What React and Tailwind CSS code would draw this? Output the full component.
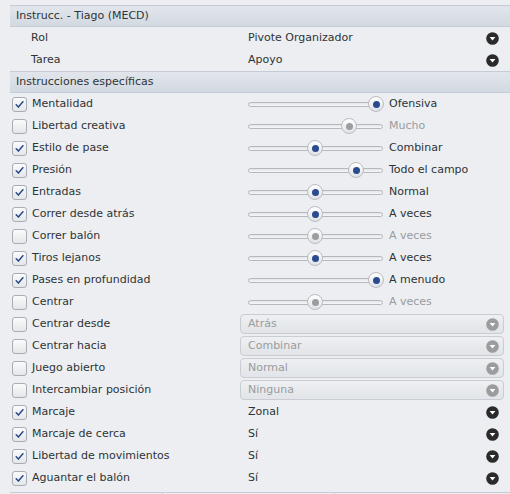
import React from 'react';

const font = { fontFamily: '"DejaVu Sans", "Liberation Sans", sans-serif' };

const Arrow = ({ disabled }) => (
  <svg width="13" height="13" viewBox="0 0 13 13" className="shrink-0">
    <circle cx="6.5" cy="6.5" r="6.3" fill={disabled ? '#9a9c9e' : '#2b2b2b'} />
    <path d="M3.6 5h5.8L6.5 8.4z" fill="#ffffff" />
  </svg>
);

const Check = ({ on }) => (
  <div className="w-[15px] h-[15px] rounded-[3px] border border-[#a9adb3] bg-gradient-to-b from-[#fbfbfc] to-[#e4e6e9] flex items-center justify-center shrink-0">
    {on && (
      <svg width="11" height="11" viewBox="0 0 11 11">
        <path d="M2.2 5.8l2.2 2.3L8.9 2.7" fill="none" stroke="#2c4a8c" strokeWidth="1.5" strokeLinecap="round" strokeLinejoin="round" />
      </svg>
    )}
  </div>
);

const Slider = ({ pos, disabled, label }) => (
  <div className="flex items-center h-full pl-[8px]">
    <div className="relative w-[135px] h-[16px] flex items-center">
      <div className="w-full h-[5px] rounded-full border border-[#b5b8bc] bg-gradient-to-b from-[#e2e4e7] to-[#f6f7f8]" />
      <div
        className="absolute top-0 w-[16px] h-[16px] rounded-full border border-[#b9bcc1] bg-gradient-to-b from-[#ffffff] to-[#dfe2e6] flex items-center justify-center"
        style={{ left: pos - 8 }}
      >
        <div className={`w-[7px] h-[7px] rounded-full ${disabled ? 'bg-[#9b9d9f]' : 'bg-[#2a4b8d]'}`} />
      </div>
    </div>
    <span className={`ml-[6px] ${disabled ? 'text-[#9a9c9e]' : 'text-[#2e3436]'}`}>{label}</span>
  </div>
);

const Select = ({ value }) => (
  <div className="flex items-center justify-between h-full pl-[8px] pr-[5px]">
    <span>{value}</span>
    <Arrow />
  </div>
);

const Combo = ({ value }) => (
  <div className="flex items-center justify-between h-[20px] rounded-[4px] border border-[#c9ccd1] bg-gradient-to-b from-[#eef0f2] to-[#e1e4e8] pl-[7px] pr-[4px] text-[#9a9c9e]">
    <span>{value}</span>
    <Arrow disabled />
  </div>
);

const Header = ({ children }) => (
  <div className="h-[22px] flex items-center pl-[6px] border-t border-b border-[#c6ccd6] bg-gradient-to-b from-[#e2e6ec] to-[#d3d9e2] text-[#2e3436]">
    {children}
  </div>
);

const rows = [
  { name: 'Mentalidad', on: true, type: 'slider', pos: 128, value: 'Ofensiva' },
  { name: 'Libertad creativa', on: false, type: 'slider', pos: 101, value: 'Mucho' },
  { name: 'Estilo de pase', on: true, type: 'slider', pos: 67, value: 'Combinar' },
  { name: 'Presión', on: true, type: 'slider', pos: 108, value: 'Todo el campo' },
  { name: 'Entradas', on: true, type: 'slider', pos: 67, value: 'Normal' },
  { name: 'Correr desde atrás', on: true, type: 'slider', pos: 67, value: 'A veces' },
  { name: 'Correr balón', on: false, type: 'slider', pos: 67, value: 'A veces' },
  { name: 'Tiros lejanos', on: true, type: 'slider', pos: 67, value: 'A veces' },
  { name: 'Pases en profundidad', on: true, type: 'slider', pos: 128, value: 'A menudo' },
  { name: 'Centrar', on: false, type: 'slider', pos: 67, value: 'A veces' },
  { name: 'Centrar desde', on: false, type: 'combo', value: 'Atrás' },
  { name: 'Centrar hacia', on: false, type: 'combo', value: 'Combinar' },
  { name: 'Juego abierto', on: false, type: 'combo', value: 'Normal' },
  { name: 'Intercambiar posición', on: false, type: 'combo', value: 'Ninguna' },
  { name: 'Marcaje', on: true, type: 'select', value: 'Zonal' },
  { name: 'Marcaje de cerca', on: true, type: 'select', value: 'Sí' },
  { name: 'Libertad de movimientos', on: true, type: 'select', value: 'Sí' },
  { name: 'Aguantar el balón', on: true, type: 'select', value: 'Sí' },
];

export default function App() {
  return (
    <div className="w-[510px] h-[494px] overflow-hidden bg-[#eceef1] text-[11px] text-[#2e3436] pl-[10px] pt-[5px]" style={font}>
      <Header>Instrucc. - Tiago (MECD)</Header>
      <div className="grid grid-cols-[230px_264px]">
        <div className="h-[22px] flex items-center pl-[21px]">Rol</div>
        <Select value="Pivote Organizador" />
        <div className="h-[22px] flex items-center pl-[21px]">Tarea</div>
        <Select value="Apoyo" />
      </div>
      <Header>Instrucciones específicas</Header>
      <div className="grid grid-cols-[230px_264px]">
        {rows.map((r) => (
          <React.Fragment key={r.name}>
            <div className="h-[22px] flex items-center pl-[2px] gap-[5px]">
              <Check on={r.on} />
              <span>{r.name}</span>
            </div>
            <div className="h-[22px] flex flex-col justify-center">
              {r.type === 'slider' && <Slider pos={r.pos} disabled={!r.on} label={r.value} />}
              {r.type === 'combo' && <Combo value={r.value} />}
              {r.type === 'select' && <Select value={r.value} />}
            </div>
          </React.Fragment>
        ))}
      </div>
      <div className="mt-[3px] h-[10px] border-t border-[#c6ccd6] grid grid-cols-[153px_172px_1fr]">
        <div className="border-r border-[#c6ccd6]" />
        <div className="border-r border-[#c6ccd6]" />
        <div />
      </div>
    </div>
  );
}
